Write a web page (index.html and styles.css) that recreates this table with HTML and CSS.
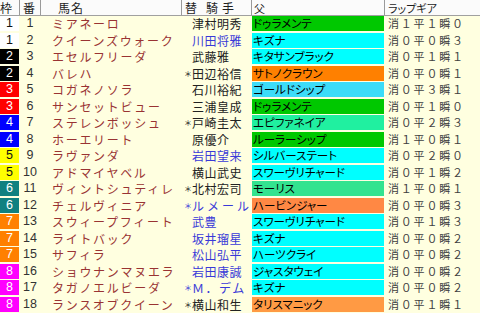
FILE: index.html
```html
<!DOCTYPE html>
<html lang="ja">
<head>
<meta charset="utf-8">
<link rel="stylesheet" href="styles.css">
</head>
<body>
<div class="sheet">
  <div class="hdr">
    <div class="h h-waku">枠</div>
    <div class="h h-num">番</div>
    <div class="h h-name">馬名</div>
    <div class="h h-jockey"><span>替</span><span class="kishu">騎手</span></div>
    <div class="h h-sire">父</div>
    <div class="h h-lap">ラップギア</div>
  </div>

  <div class="row"><div class="c-waku"><span class="waku w1">1</span></div><div class="c-num">1</div><div class="c-name">ミアネーロ</div><div class="c-jockey"><span class="mark"></span><span class="jname">津村明秀</span></div><div class="c-sire"><span class="sire s-green">ドゥラメンテ</span></div><div class="c-lap">消１平１瞬０</div></div>
  <div class="row"><div class="c-waku"><span class="waku w1">1</span></div><div class="c-num">2</div><div class="c-name">クイーンズウォーク</div><div class="c-jockey"><span class="mark"></span><span class="jname blue">川田将雅</span></div><div class="c-sire"><span class="sire s-cyan">キズナ</span></div><div class="c-lap">消０平０瞬３</div></div>
  <div class="row"><div class="c-waku"><span class="waku w2">2</span></div><div class="c-num">3</div><div class="c-name">エセルフリーダ</div><div class="c-jockey"><span class="mark"></span><span class="jname">武藤雅</span></div><div class="c-sire"><span class="sire s-cyan">キタサンブラック</span></div><div class="c-lap">消０平１瞬１</div></div>
  <div class="row"><div class="c-waku"><span class="waku w2">2</span></div><div class="c-num">4</div><div class="c-name">バレハ</div><div class="c-jockey"><span class="mark">＊</span><span class="jname">田辺裕信</span></div><div class="c-sire"><span class="sire s-orange">サトノクラウン</span></div><div class="c-lap">消０平０瞬１</div></div>
  <div class="row"><div class="c-waku"><span class="waku w3">3</span></div><div class="c-num">5</div><div class="c-name">コガネノソラ</div><div class="c-jockey"><span class="mark"></span><span class="jname">石川裕紀</span></div><div class="c-sire"><span class="sire s-sky">ゴールドシップ</span></div><div class="c-lap">消０平３瞬１</div></div>
  <div class="row"><div class="c-waku"><span class="waku w3">3</span></div><div class="c-num">6</div><div class="c-name">サンセットビュー</div><div class="c-jockey"><span class="mark"></span><span class="jname">三浦皇成</span></div><div class="c-sire"><span class="sire s-green">ドゥラメンテ</span></div><div class="c-lap">消０平１瞬０</div></div>
  <div class="row"><div class="c-waku"><span class="waku w4">4</span></div><div class="c-num">7</div><div class="c-name">ステレンボッシュ</div><div class="c-jockey"><span class="mark">＊</span><span class="jname">戸崎圭太</span></div><div class="c-sire"><span class="sire s-sea">エピファネイア</span></div><div class="c-lap">消０平２瞬３</div></div>
  <div class="row"><div class="c-waku"><span class="waku w4">4</span></div><div class="c-num">8</div><div class="c-name">ホーエリート</div><div class="c-jockey"><span class="mark"></span><span class="jname">原優介</span></div><div class="c-sire"><span class="sire s-green">ルーラーシップ</span></div><div class="c-lap">消１平０瞬１</div></div>
  <div class="row"><div class="c-waku"><span class="waku w5">5</span></div><div class="c-num">9</div><div class="c-name">ラヴァンダ</div><div class="c-jockey"><span class="mark"></span><span class="jname blue">岩田望来</span></div><div class="c-sire"><span class="sire s-cyan">シルバーステート</span></div><div class="c-lap">消０平２瞬０</div></div>
  <div class="row"><div class="c-waku"><span class="waku w5">5</span></div><div class="c-num">10</div><div class="c-name">アドマイヤベル</div><div class="c-jockey"><span class="mark"></span><span class="jname">横山武史</span></div><div class="c-sire"><span class="sire s-cyan">スワーヴリチャード</span></div><div class="c-lap">消０平１瞬２</div></div>
  <div class="row"><div class="c-waku"><span class="waku w6">6</span></div><div class="c-num">11</div><div class="c-name">ヴィントシュティレ</div><div class="c-jockey"><span class="mark">＊</span><span class="jname">北村宏司</span></div><div class="c-sire"><span class="sire s-mint">モーリス</span></div><div class="c-lap">消１平０瞬１</div></div>
  <div class="row"><div class="c-waku"><span class="waku w6">6</span></div><div class="c-num">12</div><div class="c-name">チェルヴィニア</div><div class="c-jockey"><span class="mark blue">＊</span><span class="jname blue wide">ルメール</span></div><div class="c-sire"><span class="sire s-peach">ハービンジャー</span></div><div class="c-lap">消０平０瞬３</div></div>
  <div class="row"><div class="c-waku"><span class="waku w7">7</span></div><div class="c-num">13</div><div class="c-name">スウィープフィート</div><div class="c-jockey"><span class="mark"></span><span class="jname blue">武豊</span></div><div class="c-sire"><span class="sire s-cyan">スワーヴリチャード</span></div><div class="c-lap">消０平１瞬３</div></div>
  <div class="row"><div class="c-waku"><span class="waku w7">7</span></div><div class="c-num">14</div><div class="c-name">ライトバック</div><div class="c-jockey"><span class="mark"></span><span class="jname blue">坂井瑠星</span></div><div class="c-sire"><span class="sire s-cyan">キズナ</span></div><div class="c-lap">消０平０瞬２</div></div>
  <div class="row"><div class="c-waku"><span class="waku w7">7</span></div><div class="c-num">15</div><div class="c-name">サフィラ</div><div class="c-jockey"><span class="mark"></span><span class="jname blue">松山弘平</span></div><div class="c-sire"><span class="sire s-cyan">ハーツクライ</span></div><div class="c-lap">消０平０瞬２</div></div>
  <div class="row"><div class="c-waku"><span class="waku w8">8</span></div><div class="c-num">16</div><div class="c-name">ショウナンマヌエラ</div><div class="c-jockey"><span class="mark"></span><span class="jname blue">岩田康誠</span></div><div class="c-sire"><span class="sire s-cyan">ジャスタウェイ</span></div><div class="c-lap">消０平０瞬２</div></div>
  <div class="row"><div class="c-waku"><span class="waku w8">8</span></div><div class="c-num">17</div><div class="c-name">タガノエルビーダ</div><div class="c-jockey"><span class="mark blue">＊</span><span class="jname blue dem">Ｍ．デム</span></div><div class="c-sire"><span class="sire s-cyan">キズナ</span></div><div class="c-lap">消０平０瞬２</div></div>
  <div class="row"><div class="c-waku"><span class="waku w8">8</span></div><div class="c-num">18</div><div class="c-name">ランスオブクイーン</div><div class="c-jockey"><span class="mark">＊</span><span class="jname">横山和生</span></div><div class="c-sire"><span class="sire s-tan">タリスマニック</span></div><div class="c-lap">消０平１瞬１</div></div>
</div>
</body>
</html>
```

FILE: styles.css
```css
html, body {
  margin: 0;
  padding: 0;
}
body {
  width: 480px;
  height: 313px;
  overflow: hidden;
  background: #ffffe0;
  font-family: "Noto Sans CJK JP", "Noto Sans", sans-serif;
  color: #222;
}
.sheet {
  display: flex;
  flex-direction: column;
  width: 480px;
}

/* header */
.hdr {
  display: grid;
  grid-template-columns: 20px 21px 141px 70px 133px 95px;
  height: 15px;
  border-bottom: 1px solid #a0a0a0;
  background: #fbfbfb;
}
.h {
  border-right: 1px solid #9a9a9a;
  box-sizing: border-box;
  height: 15px;
  padding-top: 1px;
  line-height: 14px;
  font-size: 12px;
  color: #1e1e1e;
  white-space: nowrap;
}
.h-waku { font-size: 12px; padding-left: 0; }
.h-num { font-size: 12px; padding-left: 3px; }
.h-name { padding-left: 17px; letter-spacing: 1px; }
.h-jockey { padding-left: 3px; }
.h-jockey .kishu { margin-left: 9px; letter-spacing: 4px; }
.h-sire { font-size: 11px; padding-left: 2px; }
.h-lap { font-size: 11px; padding-left: 3px; border-right: none; font-feature-settings: "palt"; }

/* rows */
.row {
  display: grid;
  grid-template-columns: 20px 21px 141px 70px 133px 95px;
  height: 16.5px;
  align-items: start;
  white-space: nowrap;
}
.c-waku { height: 15px; }
.waku {
  display: block;
  width: 19px;
  height: 15px;
  line-height: 15px;
  text-align: center;
  font-family: "Liberation Sans", Arial, sans-serif;
  font-size: 12.5px;
  color: #fff;
}
.w1 { background: #ffffff; color: #111; }
.w2 { background: #000000; }
.w3 { background: #ff0000; }
.w4 { background: #0000ff; }
.w5 { background: #ffff00; color: #111; }
.w6 { background: #108080; }
.w7 { background: #ff8000; }
.w8 { background: #ff00ff; }

.c-num {
  height: 15px;
  line-height: 15px;
  text-align: center;
  font-family: "Liberation Sans", Arial, sans-serif;
  font-size: 12.5px;
  color: #333;
  padding-right: 1px;
}
.c-name {
  height: 15px;
  line-height: 15px;
  padding-left: 11px;
  font-size: 12px;
  letter-spacing: 1.7px;
  color: #993333;
}
.c-jockey {
  display: flex;
  height: 15px;
  line-height: 15px;
  font-size: 12px;
  color: #222;
}
.mark {
  width: 10px;
  flex: none;
  font-size: 8px;
  text-align: right;
  color: #222;
}
.jname { letter-spacing: 0.5px; }
.blue { color: #3a3ad8; }
.jname.wide { letter-spacing: 3px; }
.jname.dem { letter-spacing: 1.5px; }

.c-sire { height: 15px; }
.sire {
  display: block;
  width: 132px;
  height: 15px;
  line-height: 15px;
  padding-left: 1px;
  box-sizing: border-box;
  font-size: 11.5px;
  font-feature-settings: "palt";
  color: #000;
}
.s-green { background: #00c800; }
.s-cyan { background: #00ffff; }
.s-sky { background: #3cdcf8; }
.s-orange { background: #ff8000; }
.s-sea { background: #20f0a0; }
.s-mint { background: #33e38f; }
.s-peach { background: #ff8844; }
.s-tan { background: #ff9a44; }

.c-lap {
  height: 15px;
  line-height: 15px;
  padding-left: 3px;
  font-size: 11px;
  letter-spacing: 1.8px;
  color: #404040;
}
```
